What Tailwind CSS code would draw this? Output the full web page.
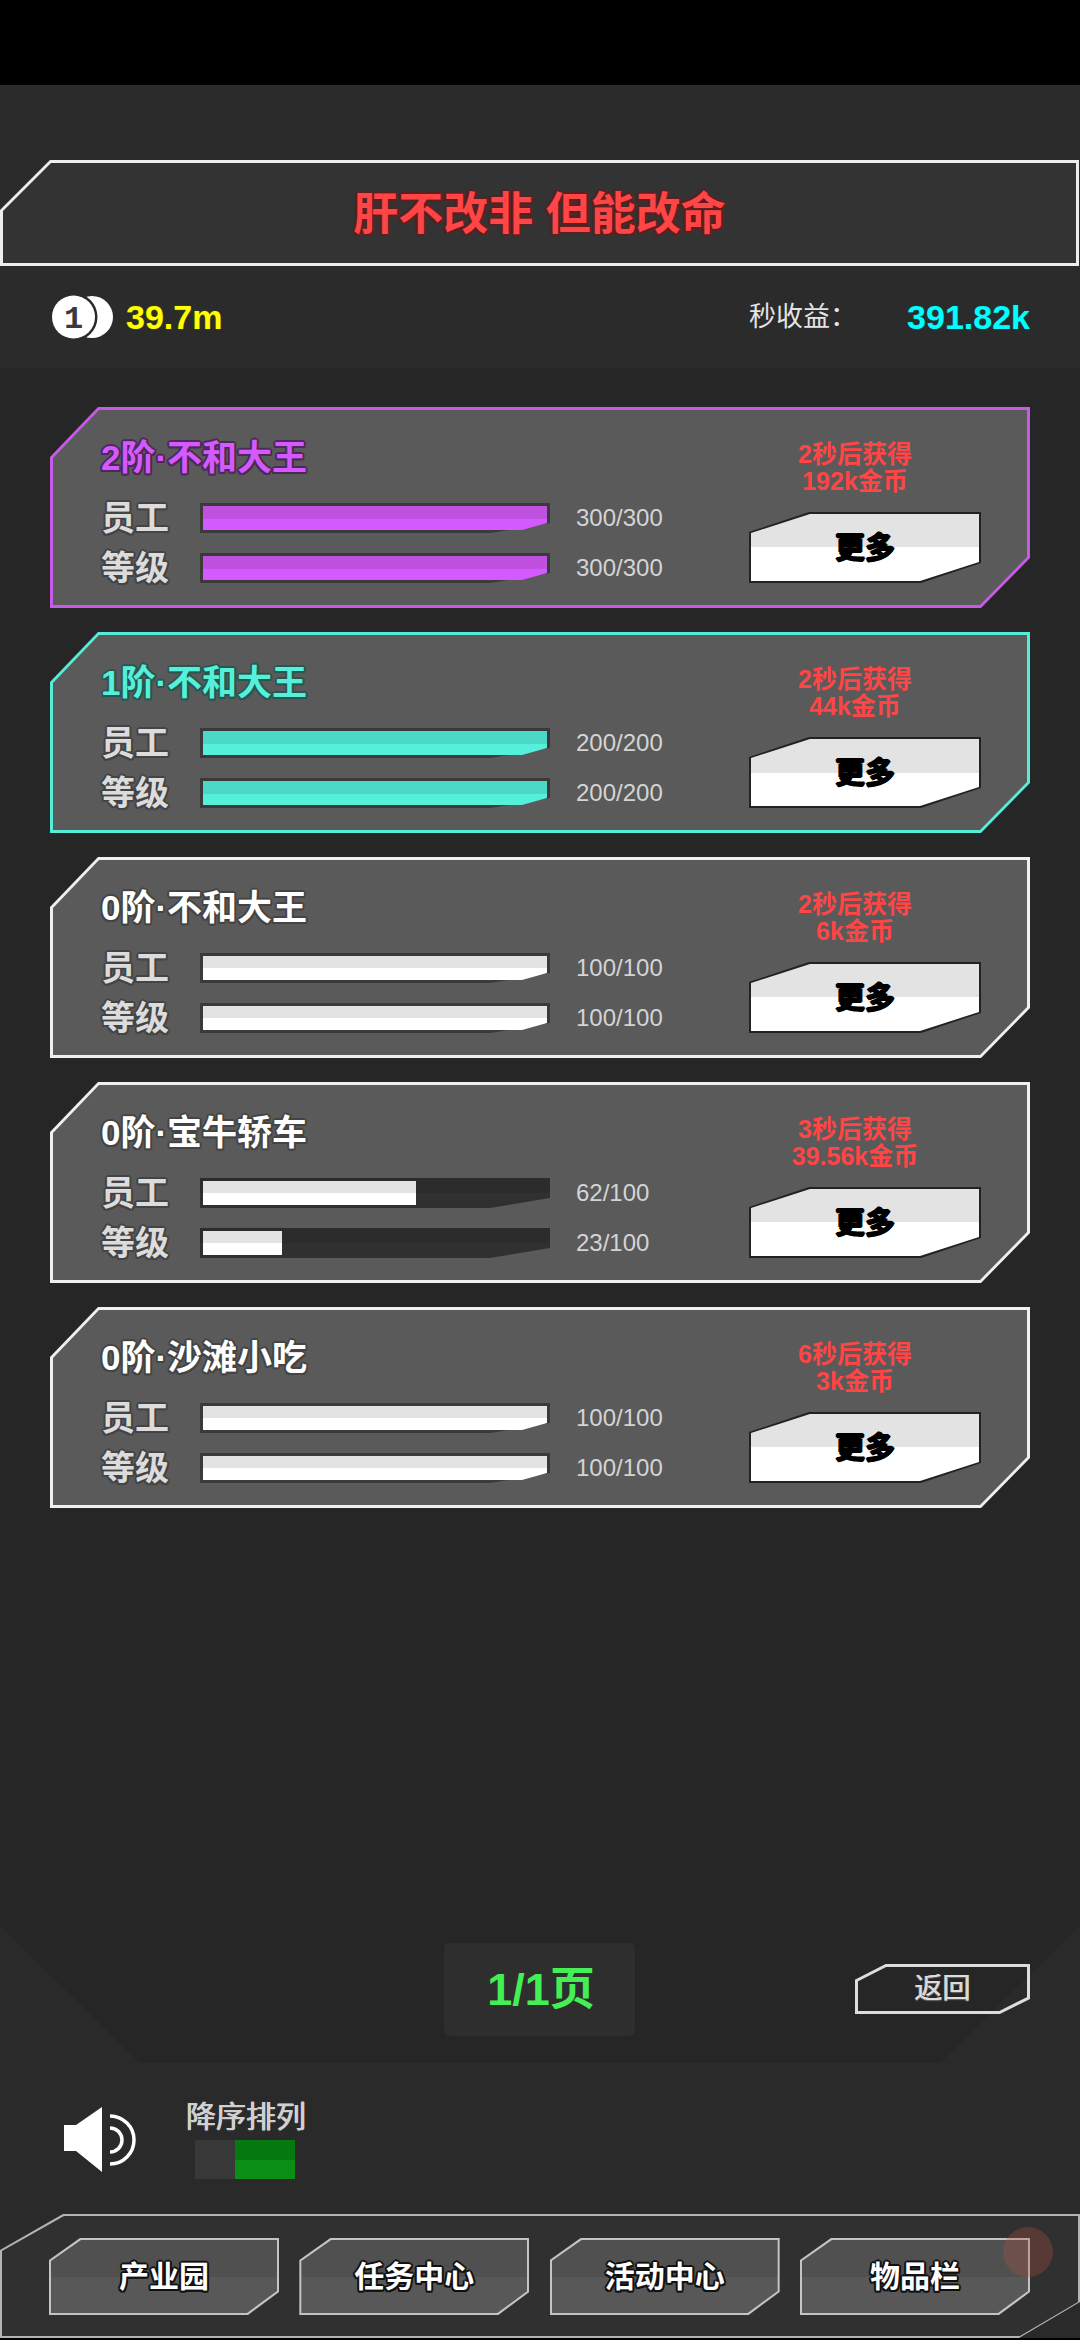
<!DOCTYPE html>
<html lang="zh">
<head>
    <meta charset="UTF-8">
    <meta name="viewport" content="width=device-width, initial-scale=1.0">
    <title>产业园</title>
    <script src="https://cdn.jsdelivr.net/npm/@tailwindcss/browser@4"></script>
</head>
<body class="relative w-[1080px] h-[2340px] overflow-hidden bg-[#2a2a2a] [font-family:'Liberation_Sans','Noto_Sans_CJK_SC',sans-serif]">

    <!-- status bar -->
    <div class="h-[85px] bg-black"></div>

    <!-- title + money -->
    <section class="h-[283px] pt-[75px] bg-[#2b2b2b]">
        <div class="w-[1079px] h-[106px] p-[3px] bg-[#eeeeee] [clip-path:polygon(50px_0,100%_0,100%_100%,0_100%,0_50px)]">
            <div class="h-full flex items-center justify-center bg-[#333333] [clip-path:polygon(48px_0,100%_0,100%_100%,0_100%,0_48px)]">
                <h1 class="mt-[2px] text-[45px] leading-none font-bold text-[#ff4545] [text-shadow:2px_0_#5c1f1f,-2px_0_#5c1f1f,0_2px_#5c1f1f,0_-2px_#5c1f1f,1.5px_1.5px_#5c1f1f,-1.5px_1.5px_#5c1f1f,1.5px_-1.5px_#5c1f1f,-1.5px_-1.5px_#5c1f1f]">肝不改非 但能改命</h1>
            </div>
        </div>
        <div class="h-[102px] pl-[50px] pr-[50px] flex items-center">
            <svg width="66" height="46" viewBox="0 0 66 46">
                <circle cx="42" cy="23" r="21" fill="#fff"/>
                <circle cx="23.5" cy="23" r="24" fill="#2b2b2b"/>
                <circle cx="23.5" cy="23" r="21.5" fill="#fff"/>
                <text x="23.5" y="34" text-anchor="middle" font-size="32" font-weight="700" fill="#3a3a3a" font-family="Liberation Mono">1</text>
            </svg>
            <span class="ml-[10px] text-[34px] leading-none font-bold text-[#ffff00] [text-shadow:0_0_2px_#55550a]">39.7m</span>
            <span class="ml-auto text-[27px] leading-none text-[#e4e4e4]">秒收益：</span>
            <span class="ml-[50px] text-[34px] leading-none font-bold text-[#00ffff] [text-shadow:0_0_2px_#0a5555]">391.82k</span>
        </div>
    </section>

    <!-- list panel -->
    <main class="relative h-[1695px] pt-[39px] flex flex-col">
        <div class="absolute inset-0 bg-[#262626] [clip-path:polygon(0_0,100%_0,100%_1557px,940px_100%,140px_100%,0_1557px)]"></div>
        <div class="relative ml-[50px] w-[980px] flex flex-col gap-[24px]">

            <!-- card: 2阶 -->
            <article class="h-[201px] p-[3px] bg-[#c85ae8] [clip-path:polygon(48px_0,100%_0,100%_calc(100%-50px),calc(100%-49px)_100%,0_100%,0_50px)]">
                <div class="h-full pl-[48px] pt-[28px] pr-[46px] flex justify-between bg-[#5a5a5a] [clip-path:polygon(46px_0,100%_0,100%_calc(100%-48px),calc(100%-47px)_100%,0_100%,0_48px)]">
                    <div>
                        <h2 class="h-[40px] text-[35px] leading-[40px] font-bold text-[#d45aff] [text-shadow:2px_0_#4c2a58,-2px_0_#4c2a58,0_2px_#4c2a58,0_-2px_#4c2a58,1.5px_1.5px_#4c2a58,-1.5px_1.5px_#4c2a58,1.5px_-1.5px_#4c2a58,-1.5px_-1.5px_#4c2a58]">2阶·不和大王</h2>
                        <div class="mt-[15px] h-[50px] flex items-center">
                            <span class="w-[99px] text-[34px] leading-none font-bold text-[#dcdcdc] [text-shadow:2px_0_#444,-2px_0_#444,0_2px_#444,0_-2px_#444,1.5px_1.5px_#444,-1.5px_1.5px_#444,1.5px_-1.5px_#444,-1.5px_-1.5px_#444]">员工</span>
                            <div class="relative w-[350px] h-[30px]">
                                <div class="absolute inset-0 bg-[#3a3a3a] [clip-path:polygon(0_0,100%_0,100%_calc(100%-10px),calc(100%-60px)_100%,0_100%)]"></div>
                                <div class="absolute left-[3px] top-[3px] bottom-[3px] w-[344px] bg-[linear-gradient(#c050e0_53%,#d45aff_53%)] [clip-path:polygon(0_0,100%_0,100%_calc(100%-7px),calc(100%-25px)_100%,0_100%)]"></div>
                            </div>
                            <span class="ml-[26px] text-[24px] leading-none text-[#d4d4d4]">300/300</span>
                        </div>
                        <div class="h-[50px] flex items-center">
                            <span class="w-[99px] text-[34px] leading-none font-bold text-[#dcdcdc] [text-shadow:2px_0_#444,-2px_0_#444,0_2px_#444,0_-2px_#444,1.5px_1.5px_#444,-1.5px_1.5px_#444,1.5px_-1.5px_#444,-1.5px_-1.5px_#444]">等级</span>
                            <div class="relative w-[350px] h-[30px]">
                                <div class="absolute inset-0 bg-[#3a3a3a] [clip-path:polygon(0_0,100%_0,100%_calc(100%-10px),calc(100%-60px)_100%,0_100%)]"></div>
                                <div class="absolute left-[3px] top-[3px] bottom-[3px] w-[344px] bg-[linear-gradient(#c050e0_53%,#d45aff_53%)] [clip-path:polygon(0_0,100%_0,100%_calc(100%-7px),calc(100%-25px)_100%,0_100%)]"></div>
                            </div>
                            <span class="ml-[26px] text-[24px] leading-none text-[#d4d4d4]">300/300</span>
                        </div>
                    </div>
                    <div class="w-[232px] flex flex-col items-center">
                        <p class="mt-[3px] mr-[20px] text-[25px] leading-[27px] font-bold text-center text-[#ff4545]">2秒后获得<br>192k金币</p>
                        <div class="mt-[17px] w-[232px] h-[71px] p-[2px] bg-[#222222] [clip-path:polygon(60px_0,100%_0,100%_calc(100%-20px),calc(100%-60px)_100%,0_100%,0_20px)]">
                            <button class="w-full h-full text-[30px] font-bold text-black [text-shadow:1px_0_#000,-1px_0_#000,0_1px_#000,0_-1px_#000] bg-[linear-gradient(#e3e3e3_50%,#ffffff_50%)] [clip-path:polygon(59px_0,100%_0,100%_calc(100%-19px),calc(100%-59px)_100%,0_100%,0_19px)]">更多</button>
                        </div>
                    </div>
                </div>
            </article>

            <!-- card: 1阶 -->
            <article class="h-[201px] p-[3px] bg-[#55ecd8] [clip-path:polygon(48px_0,100%_0,100%_calc(100%-50px),calc(100%-49px)_100%,0_100%,0_50px)]">
                <div class="h-full pl-[48px] pt-[28px] pr-[46px] flex justify-between bg-[#5a5a5a] [clip-path:polygon(46px_0,100%_0,100%_calc(100%-48px),calc(100%-47px)_100%,0_100%,0_48px)]">
                    <div>
                        <h2 class="h-[40px] text-[35px] leading-[40px] font-bold text-[#55f0dc] [text-shadow:2px_0_#2a5650,-2px_0_#2a5650,0_2px_#2a5650,0_-2px_#2a5650,1.5px_1.5px_#2a5650,-1.5px_1.5px_#2a5650,1.5px_-1.5px_#2a5650,-1.5px_-1.5px_#2a5650]">1阶·不和大王</h2>
                        <div class="mt-[15px] h-[50px] flex items-center">
                            <span class="w-[99px] text-[34px] leading-none font-bold text-[#dcdcdc] [text-shadow:2px_0_#444,-2px_0_#444,0_2px_#444,0_-2px_#444,1.5px_1.5px_#444,-1.5px_1.5px_#444,1.5px_-1.5px_#444,-1.5px_-1.5px_#444]">员工</span>
                            <div class="relative w-[350px] h-[30px]">
                                <div class="absolute inset-0 bg-[#3a3a3a] [clip-path:polygon(0_0,100%_0,100%_calc(100%-10px),calc(100%-60px)_100%,0_100%)]"></div>
                                <div class="absolute left-[3px] top-[3px] bottom-[3px] w-[344px] bg-[linear-gradient(#4cd8c6_53%,#55f0dc_53%)] [clip-path:polygon(0_0,100%_0,100%_calc(100%-7px),calc(100%-25px)_100%,0_100%)]"></div>
                            </div>
                            <span class="ml-[26px] text-[24px] leading-none text-[#d4d4d4]">200/200</span>
                        </div>
                        <div class="h-[50px] flex items-center">
                            <span class="w-[99px] text-[34px] leading-none font-bold text-[#dcdcdc] [text-shadow:2px_0_#444,-2px_0_#444,0_2px_#444,0_-2px_#444,1.5px_1.5px_#444,-1.5px_1.5px_#444,1.5px_-1.5px_#444,-1.5px_-1.5px_#444]">等级</span>
                            <div class="relative w-[350px] h-[30px]">
                                <div class="absolute inset-0 bg-[#3a3a3a] [clip-path:polygon(0_0,100%_0,100%_calc(100%-10px),calc(100%-60px)_100%,0_100%)]"></div>
                                <div class="absolute left-[3px] top-[3px] bottom-[3px] w-[344px] bg-[linear-gradient(#4cd8c6_53%,#55f0dc_53%)] [clip-path:polygon(0_0,100%_0,100%_calc(100%-7px),calc(100%-25px)_100%,0_100%)]"></div>
                            </div>
                            <span class="ml-[26px] text-[24px] leading-none text-[#d4d4d4]">200/200</span>
                        </div>
                    </div>
                    <div class="w-[232px] flex flex-col items-center">
                        <p class="mt-[3px] mr-[20px] text-[25px] leading-[27px] font-bold text-center text-[#ff4545]">2秒后获得<br>44k金币</p>
                        <div class="mt-[17px] w-[232px] h-[71px] p-[2px] bg-[#222222] [clip-path:polygon(60px_0,100%_0,100%_calc(100%-20px),calc(100%-60px)_100%,0_100%,0_20px)]">
                            <button class="w-full h-full text-[30px] font-bold text-black [text-shadow:1px_0_#000,-1px_0_#000,0_1px_#000,0_-1px_#000] bg-[linear-gradient(#e3e3e3_50%,#ffffff_50%)] [clip-path:polygon(59px_0,100%_0,100%_calc(100%-19px),calc(100%-59px)_100%,0_100%,0_19px)]">更多</button>
                        </div>
                    </div>
                </div>
            </article>

            <!-- card: 0阶 不和大王 -->
            <article class="h-[201px] p-[3px] bg-[#f0f0f0] [clip-path:polygon(48px_0,100%_0,100%_calc(100%-50px),calc(100%-49px)_100%,0_100%,0_50px)]">
                <div class="h-full pl-[48px] pt-[28px] pr-[46px] flex justify-between bg-[#5a5a5a] [clip-path:polygon(46px_0,100%_0,100%_calc(100%-48px),calc(100%-47px)_100%,0_100%,0_48px)]">
                    <div>
                        <h2 class="h-[40px] text-[35px] leading-[40px] font-bold text-white [text-shadow:2px_0_#444,-2px_0_#444,0_2px_#444,0_-2px_#444,1.5px_1.5px_#444,-1.5px_1.5px_#444,1.5px_-1.5px_#444,-1.5px_-1.5px_#444]">0阶·不和大王</h2>
                        <div class="mt-[15px] h-[50px] flex items-center">
                            <span class="w-[99px] text-[34px] leading-none font-bold text-[#dcdcdc] [text-shadow:2px_0_#444,-2px_0_#444,0_2px_#444,0_-2px_#444,1.5px_1.5px_#444,-1.5px_1.5px_#444,1.5px_-1.5px_#444,-1.5px_-1.5px_#444]">员工</span>
                            <div class="relative w-[350px] h-[30px]">
                                <div class="absolute inset-0 bg-[#3a3a3a] [clip-path:polygon(0_0,100%_0,100%_calc(100%-10px),calc(100%-60px)_100%,0_100%)]"></div>
                                <div class="absolute left-[3px] top-[3px] bottom-[3px] w-[344px] bg-[linear-gradient(#e3e3e3_50%,#ffffff_50%)] [clip-path:polygon(0_0,100%_0,100%_calc(100%-7px),calc(100%-25px)_100%,0_100%)]"></div>
                            </div>
                            <span class="ml-[26px] text-[24px] leading-none text-[#d4d4d4]">100/100</span>
                        </div>
                        <div class="h-[50px] flex items-center">
                            <span class="w-[99px] text-[34px] leading-none font-bold text-[#dcdcdc] [text-shadow:2px_0_#444,-2px_0_#444,0_2px_#444,0_-2px_#444,1.5px_1.5px_#444,-1.5px_1.5px_#444,1.5px_-1.5px_#444,-1.5px_-1.5px_#444]">等级</span>
                            <div class="relative w-[350px] h-[30px]">
                                <div class="absolute inset-0 bg-[#3a3a3a] [clip-path:polygon(0_0,100%_0,100%_calc(100%-10px),calc(100%-60px)_100%,0_100%)]"></div>
                                <div class="absolute left-[3px] top-[3px] bottom-[3px] w-[344px] bg-[linear-gradient(#e3e3e3_50%,#ffffff_50%)] [clip-path:polygon(0_0,100%_0,100%_calc(100%-7px),calc(100%-25px)_100%,0_100%)]"></div>
                            </div>
                            <span class="ml-[26px] text-[24px] leading-none text-[#d4d4d4]">100/100</span>
                        </div>
                    </div>
                    <div class="w-[232px] flex flex-col items-center">
                        <p class="mt-[3px] mr-[20px] text-[25px] leading-[27px] font-bold text-center text-[#ff4545]">2秒后获得<br>6k金币</p>
                        <div class="mt-[17px] w-[232px] h-[71px] p-[2px] bg-[#222222] [clip-path:polygon(60px_0,100%_0,100%_calc(100%-20px),calc(100%-60px)_100%,0_100%,0_20px)]">
                            <button class="w-full h-full text-[30px] font-bold text-black [text-shadow:1px_0_#000,-1px_0_#000,0_1px_#000,0_-1px_#000] bg-[linear-gradient(#e3e3e3_50%,#ffffff_50%)] [clip-path:polygon(59px_0,100%_0,100%_calc(100%-19px),calc(100%-59px)_100%,0_100%,0_19px)]">更多</button>
                        </div>
                    </div>
                </div>
            </article>

            <!-- card: 宝牛轿车 -->
            <article class="h-[201px] p-[3px] bg-[#f0f0f0] [clip-path:polygon(48px_0,100%_0,100%_calc(100%-50px),calc(100%-49px)_100%,0_100%,0_50px)]">
                <div class="h-full pl-[48px] pt-[28px] pr-[46px] flex justify-between bg-[#5a5a5a] [clip-path:polygon(46px_0,100%_0,100%_calc(100%-48px),calc(100%-47px)_100%,0_100%,0_48px)]">
                    <div>
                        <h2 class="h-[40px] text-[35px] leading-[40px] font-bold text-white [text-shadow:2px_0_#444,-2px_0_#444,0_2px_#444,0_-2px_#444,1.5px_1.5px_#444,-1.5px_1.5px_#444,1.5px_-1.5px_#444,-1.5px_-1.5px_#444]">0阶·宝牛轿车</h2>
                        <div class="mt-[15px] h-[50px] flex items-center">
                            <span class="w-[99px] text-[34px] leading-none font-bold text-[#dcdcdc] [text-shadow:2px_0_#444,-2px_0_#444,0_2px_#444,0_-2px_#444,1.5px_1.5px_#444,-1.5px_1.5px_#444,1.5px_-1.5px_#444,-1.5px_-1.5px_#444]">员工</span>
                            <div class="relative w-[350px] h-[30px]">
                                <div class="absolute inset-0 bg-[linear-gradient(#2c2c2c_50%,#303030_50%)] [clip-path:polygon(0_0,100%_0,100%_calc(100%-10px),calc(100%-60px)_100%,0_100%)]"></div>
                                <div class="absolute left-[3px] top-[3px] bottom-[3px] w-[213px] bg-[linear-gradient(#e3e3e3_50%,#ffffff_50%)]"></div>
                            </div>
                            <span class="ml-[26px] text-[24px] leading-none text-[#d4d4d4]">62/100</span>
                        </div>
                        <div class="h-[50px] flex items-center">
                            <span class="w-[99px] text-[34px] leading-none font-bold text-[#dcdcdc] [text-shadow:2px_0_#444,-2px_0_#444,0_2px_#444,0_-2px_#444,1.5px_1.5px_#444,-1.5px_1.5px_#444,1.5px_-1.5px_#444,-1.5px_-1.5px_#444]">等级</span>
                            <div class="relative w-[350px] h-[30px]">
                                <div class="absolute inset-0 bg-[linear-gradient(#2c2c2c_50%,#303030_50%)] [clip-path:polygon(0_0,100%_0,100%_calc(100%-10px),calc(100%-60px)_100%,0_100%)]"></div>
                                <div class="absolute left-[3px] top-[3px] bottom-[3px] w-[79px] bg-[linear-gradient(#e3e3e3_50%,#ffffff_50%)]"></div>
                            </div>
                            <span class="ml-[26px] text-[24px] leading-none text-[#d4d4d4]">23/100</span>
                        </div>
                    </div>
                    <div class="w-[232px] flex flex-col items-center">
                        <p class="mt-[3px] mr-[20px] text-[25px] leading-[27px] font-bold text-center text-[#ff4545]">3秒后获得<br>39.56k金币</p>
                        <div class="mt-[17px] w-[232px] h-[71px] p-[2px] bg-[#222222] [clip-path:polygon(60px_0,100%_0,100%_calc(100%-20px),calc(100%-60px)_100%,0_100%,0_20px)]">
                            <button class="w-full h-full text-[30px] font-bold text-black [text-shadow:1px_0_#000,-1px_0_#000,0_1px_#000,0_-1px_#000] bg-[linear-gradient(#e3e3e3_50%,#ffffff_50%)] [clip-path:polygon(59px_0,100%_0,100%_calc(100%-19px),calc(100%-59px)_100%,0_100%,0_19px)]">更多</button>
                        </div>
                    </div>
                </div>
            </article>

            <!-- card: 沙滩小吃 -->
            <article class="h-[201px] p-[3px] bg-[#f0f0f0] [clip-path:polygon(48px_0,100%_0,100%_calc(100%-50px),calc(100%-49px)_100%,0_100%,0_50px)]">
                <div class="h-full pl-[48px] pt-[28px] pr-[46px] flex justify-between bg-[#5a5a5a] [clip-path:polygon(46px_0,100%_0,100%_calc(100%-48px),calc(100%-47px)_100%,0_100%,0_48px)]">
                    <div>
                        <h2 class="h-[40px] text-[35px] leading-[40px] font-bold text-white [text-shadow:2px_0_#444,-2px_0_#444,0_2px_#444,0_-2px_#444,1.5px_1.5px_#444,-1.5px_1.5px_#444,1.5px_-1.5px_#444,-1.5px_-1.5px_#444]">0阶·沙滩小吃</h2>
                        <div class="mt-[15px] h-[50px] flex items-center">
                            <span class="w-[99px] text-[34px] leading-none font-bold text-[#dcdcdc] [text-shadow:2px_0_#444,-2px_0_#444,0_2px_#444,0_-2px_#444,1.5px_1.5px_#444,-1.5px_1.5px_#444,1.5px_-1.5px_#444,-1.5px_-1.5px_#444]">员工</span>
                            <div class="relative w-[350px] h-[30px]">
                                <div class="absolute inset-0 bg-[#3a3a3a] [clip-path:polygon(0_0,100%_0,100%_calc(100%-10px),calc(100%-60px)_100%,0_100%)]"></div>
                                <div class="absolute left-[3px] top-[3px] bottom-[3px] w-[344px] bg-[linear-gradient(#e3e3e3_50%,#ffffff_50%)] [clip-path:polygon(0_0,100%_0,100%_calc(100%-7px),calc(100%-25px)_100%,0_100%)]"></div>
                            </div>
                            <span class="ml-[26px] text-[24px] leading-none text-[#d4d4d4]">100/100</span>
                        </div>
                        <div class="h-[50px] flex items-center">
                            <span class="w-[99px] text-[34px] leading-none font-bold text-[#dcdcdc] [text-shadow:2px_0_#444,-2px_0_#444,0_2px_#444,0_-2px_#444,1.5px_1.5px_#444,-1.5px_1.5px_#444,1.5px_-1.5px_#444,-1.5px_-1.5px_#444]">等级</span>
                            <div class="relative w-[350px] h-[30px]">
                                <div class="absolute inset-0 bg-[#3a3a3a] [clip-path:polygon(0_0,100%_0,100%_calc(100%-10px),calc(100%-60px)_100%,0_100%)]"></div>
                                <div class="absolute left-[3px] top-[3px] bottom-[3px] w-[344px] bg-[linear-gradient(#e3e3e3_50%,#ffffff_50%)] [clip-path:polygon(0_0,100%_0,100%_calc(100%-7px),calc(100%-25px)_100%,0_100%)]"></div>
                            </div>
                            <span class="ml-[26px] text-[24px] leading-none text-[#d4d4d4]">100/100</span>
                        </div>
                    </div>
                    <div class="w-[232px] flex flex-col items-center">
                        <p class="mt-[3px] mr-[20px] text-[25px] leading-[27px] font-bold text-center text-[#ff4545]">6秒后获得<br>3k金币</p>
                        <div class="mt-[17px] w-[232px] h-[71px] p-[2px] bg-[#222222] [clip-path:polygon(60px_0,100%_0,100%_calc(100%-20px),calc(100%-60px)_100%,0_100%,0_20px)]">
                            <button class="w-full h-full text-[30px] font-bold text-black [text-shadow:1px_0_#000,-1px_0_#000,0_1px_#000,0_-1px_#000] bg-[linear-gradient(#e3e3e3_50%,#ffffff_50%)] [clip-path:polygon(59px_0,100%_0,100%_calc(100%-19px),calc(100%-59px)_100%,0_100%,0_19px)]">更多</button>
                        </div>
                    </div>
                </div>
            </article>
        </div>

        <!-- pager -->
        <div class="relative mt-[435px] grid grid-cols-[444px_191px_1fr]">
            <div></div>
            <div class="h-[93px] pl-[3px] flex items-center justify-center rounded-[5px] bg-[#2e2e2e]">
                <span class="text-[45px] leading-none font-bold text-[#44ee55]">1/1页</span>
            </div>
            <div class="pt-[21px] pl-[220px]">
                <button class="relative w-[175px] h-[50px] text-[28px] leading-none text-[#dddddd] [text-shadow:0_1px_1px_#666,0.5px_0_#ddd,-0.5px_0_#ddd]">
                    <svg class="absolute inset-0" width="175" height="50" viewBox="0 0 175 50" fill="none">
                        <path d="M1.5 16.5 L31 1.5 H173.5 V34 L144.5 48.5 H1.5 Z" stroke="#dddddd" stroke-width="3"/>
                    </svg>
                    <span class="relative">返回</span>
                </button>
            </div>
        </div>
    </main>

    <!-- sound + sort -->
    <section class="h-[151px] pt-[39px] pl-[64px] flex items-start">
        <svg class="mt-[5px]" width="72" height="66" viewBox="0 0 72 66" fill="none">
            <path d="M0 18 H12 L38 0 V65 L12 44 H0 Z" fill="#fff"/>
            <path d="M46 9 A24 24 0 0 1 46 57" stroke="#fff" stroke-width="3.5"/>
            <path d="M46 21 A12 12 0 0 1 46 45" stroke="#fff" stroke-width="3.5"/>
        </svg>
        <div class="ml-[50px] flex flex-col">
            <span class="text-[30px] leading-none text-[#d0d0d0] [text-shadow:0.5px_0_#d0d0d0,-0.5px_0_#d0d0d0,0_1px_1px_#555]">降序排列</span>
            <div class="mt-[8px] ml-[9px] w-[100px] h-[39px] flex">
                <div class="w-[40px] bg-[#383838]"></div>
                <div class="flex-1 bg-[linear-gradient(#067a10_50%,#0a8f14_50%)]"></div>
            </div>
        </div>
    </section>

    <!-- bottom nav -->
    <nav class="h-[124px] p-[2px] bg-[#b4b4b4] [clip-path:polygon(63px_0,100%_0,100%_88px,1019px_100%,0_100%,0_36px)]">
        <div class="h-full pl-[47px] pr-[48px] pt-[22px] flex justify-between bg-[#303030] [clip-path:polygon(62px_0,100%_0,100%_86px,1018px_100%,0_100%,0_35px)]">
            <div class="w-[230px] h-[77px] p-[2px] bg-[#c4c4c4] [clip-path:polygon(31px_0,100%_0,100%_calc(100%-23px),calc(100%-31px)_100%,0_100%,0_22px)]">
                <button class="w-full h-full text-[30px] leading-none font-bold text-white [text-shadow:2px_0_#111,-2px_0_#111,0_2px_#111,0_-2px_#111,1.5px_1.5px_#111,-1.5px_1.5px_#111,1.5px_-1.5px_#111,-1.5px_-1.5px_#111] bg-[linear-gradient(#505050_50%,#585858_50%)] [clip-path:polygon(30px_0,100%_0,100%_calc(100%-22px),calc(100%-30px)_100%,0_100%,0_21px)]">产业园</button>
            </div>
            <div class="w-[230px] h-[77px] p-[2px] bg-[#c4c4c4] [clip-path:polygon(31px_0,100%_0,100%_calc(100%-23px),calc(100%-31px)_100%,0_100%,0_22px)]">
                <button class="w-full h-full text-[30px] leading-none font-bold text-white [text-shadow:2px_0_#111,-2px_0_#111,0_2px_#111,0_-2px_#111,1.5px_1.5px_#111,-1.5px_1.5px_#111,1.5px_-1.5px_#111,-1.5px_-1.5px_#111] bg-[linear-gradient(#505050_50%,#585858_50%)] [clip-path:polygon(30px_0,100%_0,100%_calc(100%-22px),calc(100%-30px)_100%,0_100%,0_21px)]">任务中心</button>
            </div>
            <div class="w-[230px] h-[77px] p-[2px] bg-[#c4c4c4] [clip-path:polygon(31px_0,100%_0,100%_calc(100%-23px),calc(100%-31px)_100%,0_100%,0_22px)]">
                <button class="w-full h-full text-[30px] leading-none font-bold text-white [text-shadow:2px_0_#111,-2px_0_#111,0_2px_#111,0_-2px_#111,1.5px_1.5px_#111,-1.5px_1.5px_#111,1.5px_-1.5px_#111,-1.5px_-1.5px_#111] bg-[linear-gradient(#505050_50%,#585858_50%)] [clip-path:polygon(30px_0,100%_0,100%_calc(100%-22px),calc(100%-30px)_100%,0_100%,0_21px)]">活动中心</button>
            </div>
            <div class="w-[230px] h-[77px] p-[2px] bg-[#c4c4c4] [clip-path:polygon(31px_0,100%_0,100%_calc(100%-23px),calc(100%-31px)_100%,0_100%,0_22px)]">
                <button class="w-full h-full text-[30px] leading-none font-bold text-white [text-shadow:2px_0_#111,-2px_0_#111,0_2px_#111,0_-2px_#111,1.5px_1.5px_#111,-1.5px_1.5px_#111,1.5px_-1.5px_#111,-1.5px_-1.5px_#111] bg-[linear-gradient(#505050_50%,#585858_50%)] [clip-path:polygon(30px_0,100%_0,100%_calc(100%-22px),calc(100%-30px)_100%,0_100%,0_21px)]">物品栏</button>
            </div>
        </div>
    </nav>
    <div class="h-[2px] bg-black"></div>

    <!-- floating assist dot -->
    <div class="absolute left-[1003px] top-[2227px] w-[50px] h-[50px] rounded-full bg-[#b45046]/30"></div>

</body>
</html>
